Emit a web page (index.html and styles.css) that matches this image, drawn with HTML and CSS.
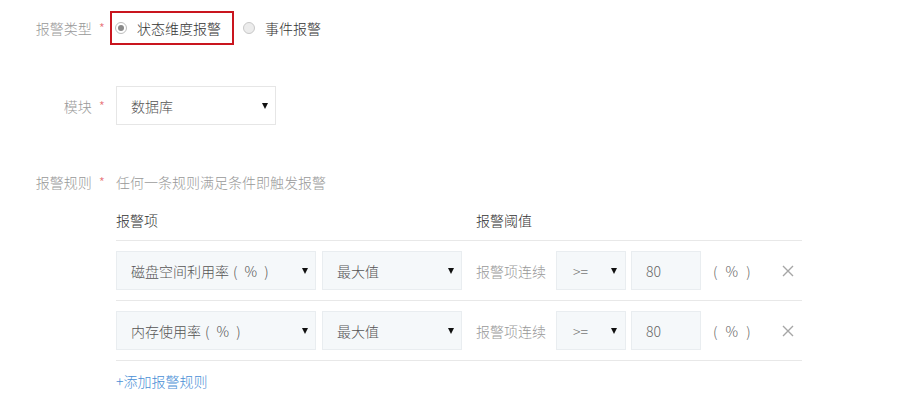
FILE: index.html
```html
<!DOCTYPE html>
<html lang="zh-CN">
<head>
<meta charset="utf-8">
<title>报警规则</title>
<link rel="stylesheet" href="styles.css">
</head>
<body>
<div class="form">
  <div class="row row-type">
    <div class="label">报警类型<span class="req">*</span></div>
    <div class="field radios">
      <label class="radio-item highlighted">
        <span class="radio checked"></span>
        <span class="radio-text">状态维度报警</span>
      </label>
      <label class="radio-item">
        <span class="radio"></span>
        <span class="radio-text">事件报警</span>
      </label>
    </div>
  </div>

  <div class="row row-module">
    <div class="label">模块<span class="req">*</span></div>
    <div class="field">
      <div class="select select-white select-module">
        <span class="select-text">数据库</span>
        <span class="arrow"></span>
      </div>
    </div>
  </div>

  <div class="row row-rules">
    <div class="label">报警规则<span class="req">*</span></div>
    <div class="field hint">任何一条规则满足条件即触发报警</div>
  </div>

  <div class="rules">
    <div class="rules-head">
      <div class="col-item">报警项</div>
      <div class="col-threshold">报警阈值</div>
    </div>

    <div class="rule">
      <div class="select select-metric">
        <span class="select-text">磁盘空间利用率<span class="paren">( % )</span></span>
        <span class="arrow"></span>
      </div>
      <div class="select select-agg">
        <span class="select-text">最大值</span>
        <span class="arrow"></span>
      </div>
      <div class="cont">报警项连续</div>
      <div class="select select-op">
        <span class="select-text op">&gt;=</span>
        <span class="arrow"></span>
      </div>
      <div class="input">80</div>
      <div class="unit">( % )</div>
      <div class="remove">
        <svg width="12" height="12" viewBox="0 0 12 12"><path d="M1 1L11 11M11 1L1 11" stroke="#a6a6a6" stroke-width="1.4" fill="none"/></svg>
      </div>
    </div>

    <div class="rule">
      <div class="select select-metric">
        <span class="select-text">内存使用率<span class="paren">( % )</span></span>
        <span class="arrow"></span>
      </div>
      <div class="select select-agg">
        <span class="select-text">最大值</span>
        <span class="arrow"></span>
      </div>
      <div class="cont">报警项连续</div>
      <div class="select select-op">
        <span class="select-text op">&gt;=</span>
        <span class="arrow"></span>
      </div>
      <div class="input">80</div>
      <div class="unit">( % )</div>
      <div class="remove">
        <svg width="12" height="12" viewBox="0 0 12 12"><path d="M1 1L11 11M11 1L1 11" stroke="#a6a6a6" stroke-width="1.4" fill="none"/></svg>
      </div>
    </div>

    <a class="add-rule">+添加报警规则</a>
  </div>
</div>
</body>
</html>
```

FILE: styles.css
```css
* {
  box-sizing: border-box;
}

html, body {
  margin: 0;
  padding: 0;
  background: #ffffff;
}

body {
  font-family: "Noto Sans CJK SC", "Noto Sans", "Liberation Sans", sans-serif;
  font-size: 14px;
  font-weight: 300;
  color: #333333;
  width: 913px;
  height: 411px;
  overflow: hidden;
}

.form {
  padding-top: 11px;
}

.row {
  display: flex;
  align-items: center;
}

.label {
  width: 116px;
  flex: none;
  text-align: right;
  padding-right: 11px;
  color: #999999;
  line-height: 16px;
}

.req {
  color: #e8737a;
  margin-left: 7px;
}

.field {
  display: flex;
  align-items: center;
}

/* radio row */
.row-type {
  height: 34px;
}

.radios {
  margin-left: -6px;
}

.radio-item {
  display: flex;
  align-items: center;
  height: 34px;
}

.radio-item.highlighted {
  width: 124px;
  border: 2px solid #c9151e;
  padding-left: 3px;
  margin-right: 9px;
}

.radio {
  width: 12px;
  height: 12px;
  border-radius: 50%;
  border: 1px solid #c8c8c8;
  background: #ececec;
  position: relative;
  flex: none;
}

.radio.checked {
  background: #ffffff;
  border-color: #bdbdbd;
}

.radio.checked::after {
  content: "";
  position: absolute;
  left: 2px;
  top: 2px;
  width: 6px;
  height: 6px;
  border-radius: 50%;
  background: #8a8a8a;
}

.radio-text {
  margin-left: 10px;
  color: #333333;
  line-height: 16px;
}

/* selects */
.select {
  display: flex;
  align-items: center;
  justify-content: space-between;
  height: 39px;
  border: 1px solid #e9edf0;
  background: #f5f8fa;
  padding: 0 7px 0 14px;
  flex: none;
}

.select-white {
  background: #ffffff;
  border-color: #e6e6e6;
}

.select-text {
  color: #555555;
  line-height: 16px;
  white-space: nowrap;
}

.select-text.op {
  color: #777777;
}

.paren {
  margin-left: 4px;
  letter-spacing: 1px;
  word-spacing: 2px;
}

.arrow {
  width: 0;
  height: 0;
  border-left: 3.5px solid transparent;
  border-right: 3.5px solid transparent;
  border-top: 6px solid #111111;
  flex: none;
}

.row-module {
  margin-top: 41px;
}

.select-module {
  width: 160px;
}

.row-rules {
  margin-top: 49px;
}

.hint {
  color: #999999;
  line-height: 16px;
}

/* rules table */
.rules {
  margin-left: 116px;
  width: 686px;
  margin-top: 10px;
}

.rules-head {
  display: flex;
  align-items: center;
  height: 41px;
  border-bottom: 1px solid #e8e8e8;
  line-height: 16px;
  color: #333333;
}

.col-item {
  width: 360px;
}

.rule {
  display: flex;
  align-items: center;
  height: 60px;
  border-bottom: 1px solid #e8e8e8;
}

.select-metric {
  width: 200px;
}

.select-agg {
  width: 140px;
  margin-left: 6px;
}

.cont {
  margin-left: 14px;
  color: #999999;
  line-height: 16px;
  width: 70px;
  flex: none;
}

.select-op {
  width: 70px;
  margin-left: 10px;
  padding-left: 16px;
  padding-right: 8px;
}

.input {
  width: 70px;
  height: 39px;
  margin-left: 5px;
  border: 1px solid #e9edf0;
  background: #f5f8fa;
  padding-left: 14px;
  display: flex;
  align-items: center;
  color: #666666;
  flex: none;
}

.unit {
  margin-left: 12px;
  color: #666666;
  line-height: 16px;
  letter-spacing: 1px;
  word-spacing: 3px;
}

.remove {
  margin-left: 30px;
  display: flex;
  align-items: center;
}

.add-rule {
  display: block;
  margin-top: 12px;
  color: #4a8fd6;
  line-height: 16px;
  cursor: pointer;
}
```
